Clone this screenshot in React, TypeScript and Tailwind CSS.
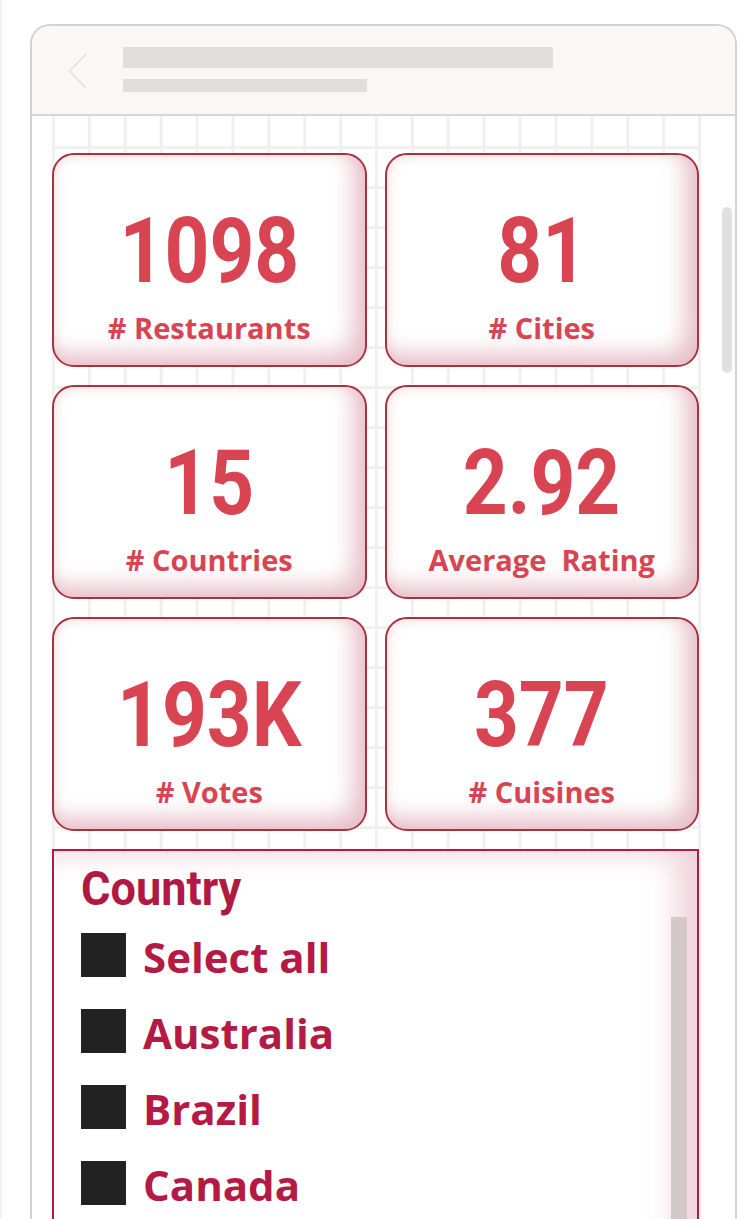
import React from "react";

const cards = [
  { value: "1098", label: "# Restaurants" },
  { value: "81", label: "# Cities" },
  { value: "15", label: "# Countries" },
  { value: "2.92", label: "Average\u00a0\u00a0Rating" },
  { value: "193K", label: "# Votes" },
  { value: "377", label: "# Cuisines" },
];

const countries = ["Select all", "Australia", "Brazil", "Canada"];

function KpiCard({ value, label }: { value: string; label: string }) {
  return (
    <div className="flex h-[214px] flex-col items-center rounded-[22px] border-2 border-[#a8323e] bg-white pt-[51px] shadow-[inset_-12px_-12px_22px_rgba(205,120,140,0.45),inset_2px_2px_10px_rgba(225,175,185,0.25)]">
      <div className="scale-x-[0.86] font-['Roboto',sans-serif] text-[91px] font-bold leading-none text-[#d94452]">
        {value}
      </div>
      <div className="mt-[16px] font-['Open_Sans',sans-serif] text-[29px] font-bold leading-none text-[#d94452]">
        {label}
      </div>
    </div>
  );
}

export default function App() {
  return (
    <div className="relative h-[1219px] w-[746px] overflow-hidden border-l-2 border-[#f0f0f0] bg-white">
      <div className="ml-[28px] mt-[24px] h-[1300px] w-[707px] rounded-t-[20px] border-2 border-b-0 border-[#d2d2d2] bg-white">
        {/* header */}
        <div className="flex h-[90px] items-start rounded-t-[18px] border-b-2 border-[#d6d6d6] bg-[#f9f8f7]">
          <svg className="ml-[36px] mt-[27px]" width="20" height="36" viewBox="0 0 20 36" fill="none">
            <path d="M18 1 L1.5 18 L18 35" stroke="#e3dfdc" strokeWidth="1.6" />
          </svg>
          <div className="ml-[35px] mt-[21px] flex flex-col gap-[11px]">
            <div className="h-[21px] w-[430px] bg-[#e0dfdd]" />
            <div className="h-[13px] w-[244px] bg-[#e0dfdd]" />
          </div>
        </div>

        {/* body */}
        <div className="flex">
          <div className="w-[20px] shrink-0" />
          <div className="h-[1120px] w-[649px] shrink-0 bg-[linear-gradient(to_right,#f0f0f0_3px,transparent_3px),linear-gradient(to_bottom,#f0f0f0_3px,transparent_3px)] [background-position:0_30px] [background-size:35.9px_40px] pr-[2px] pt-[37px]">
            <div className="grid grid-cols-2 gap-[18px]">
              {cards.map((c) => (
                <KpiCard key={c.label} value={c.value} label={c.label} />
              ))}
            </div>

            <div className="mt-[18px] flex h-[420px] border-2 border-[#b31942] bg-white shadow-[inset_-26px_8px_30px_-6px_rgba(215,140,160,0.4)]">
              <div className="flex-1 pl-[27px] pt-[13px]">
                <div className="origin-left scale-x-[0.92] font-['Roboto',sans-serif] text-[49px] font-bold leading-none text-[#b01a42]">
                  Country
                </div>
                <div className="mt-[20px] flex flex-col gap-[32px]">
                  {countries.map((name) => (
                    <div key={name} className="flex h-[44px] items-center gap-[17px]">
                      <div className="h-[44px] w-[45px] shrink-0 bg-[#222222]" />
                      <span className="mt-[4px] font-['Open_Sans',sans-serif] text-[42px] font-bold leading-none text-[#b41a43]">
                        {name}
                      </span>
                    </div>
                  ))}
                </div>
              </div>
              <div className="mr-[10px] mt-[66px] h-[400px] w-[16px] bg-[#d3c9cb]" />
            </div>
          </div>
          <div className="flex-1">
            <div className="ml-[21px] mt-[91px] h-[166px] w-[10px] rounded-full bg-[#e0e0e0]" />
          </div>
        </div>
      </div>
    </div>
  );
}
